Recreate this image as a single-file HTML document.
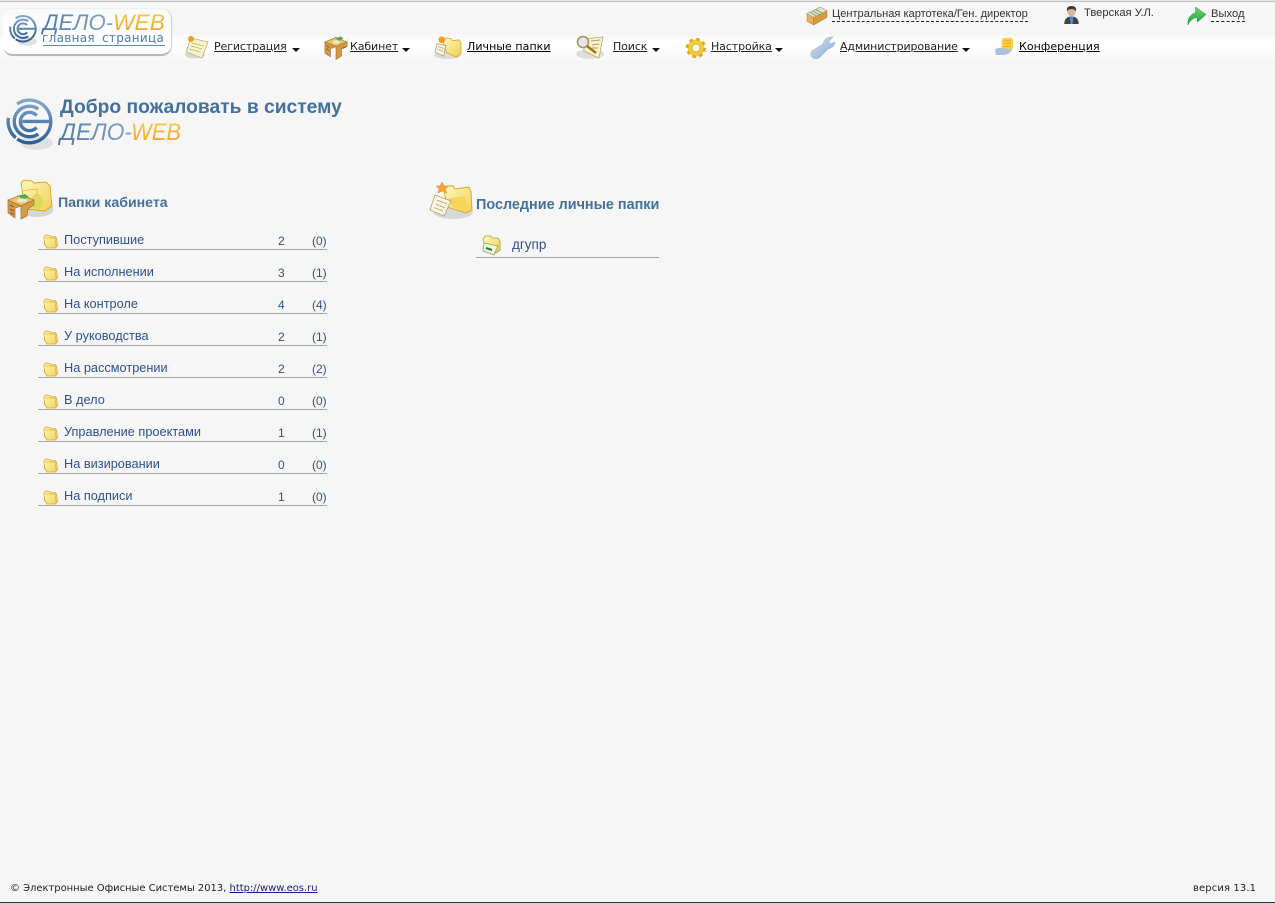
<!DOCTYPE html>
<html lang="ru">
<head>
<meta charset="utf-8">
<title>Дело-WEB</title>
<style>
html,body{margin:0;padding:0;width:1275px;height:903px;overflow:hidden;background:#f6f6f6;}
body{position:relative;font-family:"Liberation Sans",sans-serif;}
.a{position:absolute;white-space:nowrap;}
svg.a{overflow:visible;}
.m{font-family:"DejaVu Sans",sans-serif;font-size:11px;line-height:13px;color:#222;text-decoration:underline;top:40px;}
.k{color:#000;}
.t{font-family:"Liberation Sans",sans-serif;font-size:11.2px;line-height:13px;color:#333;}
.d{border-bottom:1px dashed #222;line-height:13px;height:13px;}
.ar{position:absolute;width:0;height:0;border-left:4px solid transparent;border-right:4px solid transparent;border-top:4px solid #111;}
.r{font-size:12px;line-height:14px;color:#2f5090;}
.n{font-size:12.75px;}
.l{position:absolute;height:1px;background:#a4a4a4;}
.h{font-weight:bold;color:#44709c;}
.f{font-family:"DejaVu Sans",sans-serif;font-size:9.95px;line-height:12px;color:#222;}
</style>
</head>
<body>
<svg width="0" height="0" style="position:absolute">
<defs>
<linearGradient id="fo" x1="0" y1="0" x2="1" y2="1"><stop offset="0" stop-color="#fff9c0"/><stop offset="1" stop-color="#f0d050"/></linearGradient>
<linearGradient id="bl" gradientUnits="userSpaceOnUse" x1="0" y1="4" x2="0" y2="48"><stop offset="0" stop-color="#86a9cc"/><stop offset="1" stop-color="#2b5b92"/></linearGradient>
<linearGradient id="wb" x1="0" y1="0" x2="0" y2="1"><stop offset="0" stop-color="#f9cf4b"/><stop offset="1" stop-color="#f29a22"/></linearGradient>
<linearGradient id="tx" x1="0" y1="0" x2="1" y2="0"><stop offset="0" stop-color="#4a77a5"/><stop offset="1" stop-color="#86a6c6"/></linearGradient>
<linearGradient id="gr" x1="0" y1="0" x2="0" y2="1"><stop offset="0" stop-color="#6fd86f"/><stop offset="1" stop-color="#1f9a3c"/></linearGradient>
<linearGradient id="wr" x1="0" y1="0" x2="1" y2="1"><stop offset="0" stop-color="#d5e3f1"/><stop offset="1" stop-color="#85abd2"/></linearGradient>
<symbol id="folder" viewBox="0 0 16 16">
<path d="M1 4 L3 2 L7 2.500 L8 4 L12 3.500 L13.500 5 L14.500 13 L12 15 L4 15 L1.500 11 Z" fill="url(#fo)" stroke="#cfa52e" stroke-width=".8"/>
<path d="M3 5 L12 5 L13 13" fill="none" stroke="#d9b23c" stroke-width=".7"/>
</symbol>
<symbol id="swirl" viewBox="0 0 46 56">
<ellipse cx="30" cy="47" rx="16" ry="7" fill="#e0e0e0"/>
<g fill="none" stroke="url(#bl)" stroke-width="3.300">
<path d="M10.900 8.800 A21 21 0 1 1 10.900 43.200"/>
<path d="M2.300 22.400 A21 21 0 0 0 9.500 42"/>
<path d="M31.600 13.700 A15 15 0 1 0 31.600 38.300"/>
<path d="M29.900 20.200 A9 9 0 1 0 29.900 31.800"/>
<path d="M16 26 H44"/>
</g>
</symbol>
<symbol id="note" viewBox="0 0 26 24">
<ellipse cx="11" cy="20" rx="10" ry="3.500" fill="#d8d8d8"/>
<path d="M7 3 L24 7 L18 23 L2 17 Z" fill="#fbf4c8" stroke="#b9ae7e" stroke-width=".8"/>
<path d="M8 8 L20 11 M7 11 L18 14 M5.500 14 L16 17" stroke="#b9ae7e" stroke-width=".8"/>
<circle cx="7" cy="4" r="3" fill="#f39a2a"/>
</symbol>
<symbol id="desk" viewBox="0 0 26 26">
<path d="M13 2 L25 7 L13 12 L1 7 Z" fill="#e9c05f" stroke="#a9702a" stroke-width=".7"/>
<path d="M13 3 L18 1 L21 3 L16 6 Z" fill="#49b04a"/>
<ellipse cx="13" cy="7" rx="4" ry="2" fill="#eee9cf"/>
<path d="M1 7 L1 19 L7 23 L7 14.500 L13 12 L13 26 L19 22 L19 14.500 L25 12 L25 7 L13 12 Z" fill="#d49a45" stroke="#a9702a" stroke-width=".7"/>
<path d="M2.500 11 L6 13 M2.500 14.500 L6 16.500 M20 14 L24 12" stroke="#8d5c1e"/>
</symbol>
<symbol id="nfolder" viewBox="0 0 30 26">
<ellipse cx="14" cy="21" rx="14" ry="4" fill="#dcdcdc"/>
<path d="M9 6 L13 3 L18 4 L19 6 L26 5 L28 8 L28 19 L23 23 L13 18 Z" fill="url(#fo)" stroke="#d1a52c" stroke-width=".8"/>
<path d="M3 9 L12 11 L10 22 L1 18 Z" fill="#fbf5dc" stroke="#aaa07c" stroke-width=".8"/>
<path d="M4 12 L10 14 M3.500 15 L9.500 17" stroke="#aaa07c" stroke-width=".7"/>
<circle cx="8" cy="5" r="3.500" fill="#f29a2a"/>
</symbol>
<symbol id="search" viewBox="0 0 30 26">
<ellipse cx="14" cy="20" rx="14" ry="5" fill="#dedede"/>
<path d="M8 5 L27 3 L23 24 L8 17 Z" fill="#fbf3c6" stroke="#b3a87a" stroke-width=".8"/>
<path d="M15 7 L24 6 M16 11 L23 10 M16 14 L22 14" stroke="#a79d72" stroke-width=".9"/>
<circle cx="7" cy="8" r="5.500" fill="#dfe6ee" stroke="#b29250" stroke-width="1.600"/>
<path d="M11 12 L20 19" stroke="#a3721f" stroke-width="2.400"/>
</symbol>
<symbol id="gear" viewBox="0 0 22 22">
<circle cx="11" cy="11" r="6.500" fill="none" stroke="#f2cc3a" stroke-width="4"/>
<circle cx="11" cy="11" r="8.800" fill="none" stroke="#dfa91f" stroke-width="2.800" stroke-dasharray="3.500 3.400"/>
<circle cx="11" cy="11" r="4" fill="#fdfbe6" stroke="#c89212" stroke-width=".7"/>
</symbol>
<symbol id="wrench" viewBox="0 0 26 24">
<path d="M1 20 Q0 15 5 13 L13 8 Q14 2 20 1 L23 1 L19 5 L20 8 L25 6 Q24 12 18 13 L10 21 Q5 25 1 20 Z" fill="url(#wr)" stroke="#9ab7d6" stroke-width=".6"/>
</symbol>
<symbol id="conf" viewBox="0 0 22 20">
<rect x="7" y="1" width="12" height="12" rx="3" fill="#f8cf42"/>
<path d="M9 4 H17 M9 7 H17 M9 10 H16" stroke="#e9a928"/>
<path d="M0 13 Q5 10 9 12 L15 13 L19 12 Q14 20 8 19 L1 19 Z" fill="#a9c1da"/>
</symbol>
<symbol id="box" viewBox="0 0 24 20">
<path d="M2 8 L9 12 L9 20 L2 16 Z" fill="#e8b158" stroke="#a9702a" stroke-width=".5"/>
<path d="M9 12 L23 5 L23 12 L9 20 Z" fill="#d9993f" stroke="#a9702a" stroke-width=".5"/>
<path d="M2 8 L16 1 L23 5 L9 12 Z" fill="#dbe6cc" stroke="#9a9a7a" stroke-width=".6"/>
<path d="M5 6.500 L12 10.500 M8 5 L15 9 M11 3.500 L18 7.500" stroke="#8a9a70"/>
</symbol>
<symbol id="user" viewBox="0 0 18 20">
<path d="M1 20 Q1 12 9 11.500 Q17 12 17 20 Z" fill="#3e4549"/>
<path d="M7 12 L11 12 L10 20 L8 20 Z" fill="#5f8fc4"/>
<ellipse cx="9" cy="6" rx="4.500" ry="5.500" fill="#d7b79c"/>
<path d="M4 6 Q3 0 9 0 Q15 0 14 6 Q12 3 9 3.500 Q6 3 4 6 Z" fill="#3b3b34"/>
</symbol>
<symbol id="exit" viewBox="0 0 22 20">
<path d="M2 20 Q1 10 10 7 L10 1 L21 9 L12 17 L11.500 12 Q5 13 2 20 Z" fill="url(#gr)" stroke="#259a42" stroke-width=".5"/>
</symbol>
<symbol id="recent" viewBox="0 0 22 22">
<path d="M2 5 L4 2 L10 2 L11 4 L17 4 L19 7 L19 16 L15 19 L5 17 Z" fill="url(#fo)" stroke="#b99c3a" stroke-width=".8"/>
<path d="M3 9 L17 12 L13 21 L2 17 Z" fill="#f2f8dc" stroke="#8ba25f" stroke-width=".8"/>
<path d="M5 14 L11 16" stroke="#1f7f3a" stroke-width="2"/>
</symbol>
<symbol id="bigdesk" viewBox="0 0 46 42">
<ellipse cx="30" cy="30" rx="17" ry="8" fill="#d6d6d6"/>
<path d="M14 4 L17 1 L25 2 L27 4 L39 3 L43 7 L45 27 L38 32 L18 30 Z" fill="url(#fo)" stroke="#d3a727" stroke-width=".9"/>
<ellipse cx="30" cy="23" rx="6" ry="8" fill="#d6d85a" opacity=".8"/>
<path d="M15 12 L30 10 L30 17" fill="none" stroke="#d3a727" stroke-width=".6"/>
<path d="M14 16 L27 21 L14 27 L1 21 Z" fill="#e9c46e" stroke="#a6702c" stroke-width=".7"/>
<path d="M12 17 L18 15 L22 18 L16 21 Z" fill="#4cae53"/>
<ellipse cx="15" cy="21.500" rx="5" ry="2" fill="#eee8cf"/>
<path d="M1 21 L1 34 L8 39 L8 29 L14 27 L14 40 L20 37 L21 30 L27 26 L27 21 L14 27 Z" fill="#d59c48" stroke="#a6702c" stroke-width=".7"/>
<path d="M3 26 L7 28 M3 30 L7 32 M3 33.500 L7 35.500" stroke="#8d5c1e"/>
</symbol>
<symbol id="bignf" viewBox="0 0 46 42">
<ellipse cx="24" cy="32" rx="20" ry="7" fill="#d8d8d8"/>
<path d="M15 10 L19 6 L24 6 L26 9 L40 7 L42 12 L43 30 L37 33 L18 27 Z" fill="url(#fo)" stroke="#d3a727" stroke-width=".9"/>
<path d="M18 19 L36 16 L39 31 L24 27 Z" fill="#f6d659"/>
<path d="M6 15 L22 21 L15 36 L1 30 Z" fill="#fbf6de" stroke="#aaa07c" stroke-width=".8"/>
<path d="M8 20 L18 24 M6.500 24 L16 28 M5 27.500 L14 31" stroke="#aaa07c" stroke-width=".8"/>
<path d="M13 2 L15 6 L19 6 L16 9 L18 13 L13 11 L9 13 L10 9 L7 6 L11 6 Z" fill="#f4a43a" stroke="#e88520" stroke-width=".5"/>
</symbol>
</defs>
</svg>

<!-- top bar -->
<div class="a" style="left:0;top:0;width:1275px;height:3px;background:#c0c0c0;border-top:1px solid #e8e8e8;box-sizing:border-box;border-bottom:1px solid #f4f4f4"></div>
<div class="a" style="left:0;top:32px;width:1275px;height:30px;background:linear-gradient(#f3f3f3 0,#fff 30%,#fff 55%,#f6f6f6 100%)"></div>

<!-- logo -->
<div class="a" style="left:3px;top:9px;width:168px;height:45px;background:linear-gradient(#f7f9fb,#fff 45%,#fff);border-radius:10px;border-bottom:2px solid #b8b8b8;box-shadow:1px 0 1px #ccc"></div>
<svg class="a" style="left:9px;top:13px" width="28" height="34" viewBox="0 0 46 56"><use href="#swirl" width="46" height="56"/></svg>
<svg class="a" style="left:40px;top:9px" width="130" height="40" viewBox="0 0 130 40">
<text x="3" y="21" font-family="Liberation Sans" font-size="22" font-style="italic" fill="url(#tx)" textLength="70" lengthAdjust="spacingAndGlyphs">ДЕЛО-</text>
<text x="73" y="21" font-family="Liberation Sans" font-size="22" font-style="italic" fill="url(#wb)" textLength="52" lengthAdjust="spacingAndGlyphs">WEB</text>
</svg>
<div class="a" style="left:42px;top:32px;font-family:'DejaVu Sans',sans-serif;font-size:12px;line-height:13px;color:#4f7ba8;letter-spacing:.3px;word-spacing:3px">главная страница</div>
<div class="a" style="left:43px;top:45px;width:122px;height:1px;background:#5f8ab4"></div>

<!-- top-right -->
<svg class="a" style="left:805px;top:6px" width="23" height="19"><use href="#box"/></svg>
<div class="a t d" style="left:832px;top:8px;width:196px;font-size:11.100px;letter-spacing:-.01px">Центральная картотека/Ген. директор</div>
<svg class="a" style="left:1063px;top:6px" width="17" height="18"><use href="#user"/></svg>
<div class="a t" style="left:1084px;top:7px">Тверская У.Л.</div>
<svg class="a" style="left:1186px;top:6px" width="21" height="19"><use href="#exit"/></svg>
<div class="a t d" style="left:1211px;top:8px;width:34px">Выход</div>

<!-- menu -->
<svg class="a" style="left:184px;top:35px" width="26" height="24"><use href="#note"/></svg>
<div class="a m" style="left:214px;letter-spacing:-.1px">Регистрация</div><div class="ar" style="left:292px;top:48px"></div>
<svg class="a" style="left:324px;top:35px" width="24" height="25"><use href="#desk"/></svg>
<div class="a m" style="left:350px;letter-spacing:-.1px">Кабинет</div><div class="ar" style="left:402px;top:48px"></div>
<svg class="a" style="left:434px;top:35px" width="29" height="25"><use href="#nfolder"/></svg>
<div class="a m k" style="left:467px;letter-spacing:.05px">Личные папки</div>
<svg class="a" style="left:576px;top:34px" width="30" height="26"><use href="#search"/></svg>
<div class="a m" style="left:613px;letter-spacing:-.1px">Поиск</div><div class="ar" style="left:652px;top:48px"></div>
<svg class="a" style="left:685px;top:37px" width="22" height="22"><use href="#gear"/></svg>
<div class="a m" style="left:711px;letter-spacing:-.1px">Настройка</div><div class="ar" style="left:775px;top:48px"></div>
<svg class="a" style="left:810px;top:36px" width="26" height="24"><use href="#wrench"/></svg>
<div class="a m" style="left:840px;letter-spacing:-.1px">Администрирование</div><div class="ar" style="left:962px;top:48px"></div>
<svg class="a" style="left:995px;top:37px" width="21" height="19"><use href="#conf"/></svg>
<div class="a m k" style="left:1019px;letter-spacing:.05px">Конференция</div>

<!-- welcome -->
<svg class="a" style="left:6px;top:95px" width="47" height="57" viewBox="0 0 46 56"><use href="#swirl" width="46" height="56"/></svg>
<div class="a h" style="left:60px;top:96px;font-size:19.250px;line-height:24px">Добро пожаловать в систему</div>
<svg class="a" style="left:58px;top:116px" width="130" height="32" viewBox="0 0 130 32">
<text x="2" y="24" font-family="Liberation Sans" font-size="24" font-style="italic" fill="url(#tx)" textLength="72" lengthAdjust="spacingAndGlyphs">ДЕЛО-</text>
<text x="73" y="24" font-family="Liberation Sans" font-size="24" font-style="italic" fill="url(#wb)" textLength="50" lengthAdjust="spacingAndGlyphs">WEB</text>
</svg>

<!-- left column -->
<svg class="a" style="left:7px;top:179px" width="46" height="42"><use href="#bigdesk"/></svg>
<div class="a h" style="left:58px;top:194px;font-size:14.150px;line-height:16px">Папки кабинета</div>

<svg class="a" style="left:43px;top:233px" width="16" height="16"><use href="#folder"/></svg>
<div class="a r n" style="left:64px;top:233px">Поступившие</div><div class="a r" style="left:278px;top:234px">2</div><div class="a r" style="left:312px;top:234px">(0)</div><div class="l" style="left:38px;top:249px;width:289px"></div>

<svg class="a" style="left:43px;top:265px" width="16" height="16"><use href="#folder"/></svg>
<div class="a r n" style="left:64px;top:265px">На исполнении</div><div class="a r" style="left:278px;top:266px">3</div><div class="a r" style="left:312px;top:266px">(1)</div><div class="l" style="left:38px;top:281px;width:289px"></div>

<svg class="a" style="left:43px;top:297px" width="16" height="16"><use href="#folder"/></svg>
<div class="a r n" style="left:64px;top:297px">На контроле</div><div class="a r" style="left:278px;top:298px">4</div><div class="a r" style="left:312px;top:298px">(4)</div><div class="l" style="left:38px;top:313px;width:289px"></div>

<svg class="a" style="left:43px;top:329px" width="16" height="16"><use href="#folder"/></svg>
<div class="a r n" style="left:64px;top:329px">У руководства</div><div class="a r" style="left:278px;top:330px">2</div><div class="a r" style="left:312px;top:330px">(1)</div><div class="l" style="left:38px;top:345px;width:289px"></div>

<svg class="a" style="left:43px;top:361px" width="16" height="16"><use href="#folder"/></svg>
<div class="a r n" style="left:64px;top:361px">На рассмотрении</div><div class="a r" style="left:278px;top:362px">2</div><div class="a r" style="left:312px;top:362px">(2)</div><div class="l" style="left:38px;top:377px;width:289px"></div>

<svg class="a" style="left:43px;top:393px" width="16" height="16"><use href="#folder"/></svg>
<div class="a r n" style="left:64px;top:393px">В дело</div><div class="a r" style="left:278px;top:394px">0</div><div class="a r" style="left:312px;top:394px">(0)</div><div class="l" style="left:38px;top:409px;width:289px"></div>

<svg class="a" style="left:43px;top:425px" width="16" height="16"><use href="#folder"/></svg>
<div class="a r n" style="left:64px;top:425px">Управление проектами</div><div class="a r" style="left:278px;top:426px">1</div><div class="a r" style="left:312px;top:426px">(1)</div><div class="l" style="left:38px;top:441px;width:289px"></div>

<svg class="a" style="left:43px;top:457px" width="16" height="16"><use href="#folder"/></svg>
<div class="a r n" style="left:64px;top:457px">На визировании</div><div class="a r" style="left:278px;top:458px">0</div><div class="a r" style="left:312px;top:458px">(0)</div><div class="l" style="left:38px;top:473px;width:289px"></div>

<svg class="a" style="left:43px;top:489px" width="16" height="16"><use href="#folder"/></svg>
<div class="a r n" style="left:64px;top:489px">На подписи</div><div class="a r" style="left:278px;top:490px">1</div><div class="a r" style="left:312px;top:490px">(0)</div><div class="l" style="left:38px;top:505px;width:289px"></div>

<!-- right column -->
<svg class="a" style="left:429px;top:180px" width="46" height="42"><use href="#bignf"/></svg>
<div class="a h" style="left:476px;top:197px;font-size:14.400px;line-height:16px">Последние личные папки</div>
<svg class="a" style="left:481px;top:234px" width="22" height="22"><use href="#recent"/></svg>
<div class="a r" style="left:512px;top:238px;font-size:13.500px">дгупр</div>
<div class="l" style="left:476px;top:257px;width:183px"></div>

<!-- footer -->
<div class="a f" style="left:10px;top:883px">© Электронные Офисные Системы 2013, <span style="color:#1a1a8c;text-decoration:underline">http://www.eos.ru</span></div>
<div class="a f" style="left:1193px;top:883px;letter-spacing:.15px">версия 13.1</div>
<div class="a" style="left:0;top:902px;width:1275px;height:1px;background:#26384a"></div>
</body>
</html>
